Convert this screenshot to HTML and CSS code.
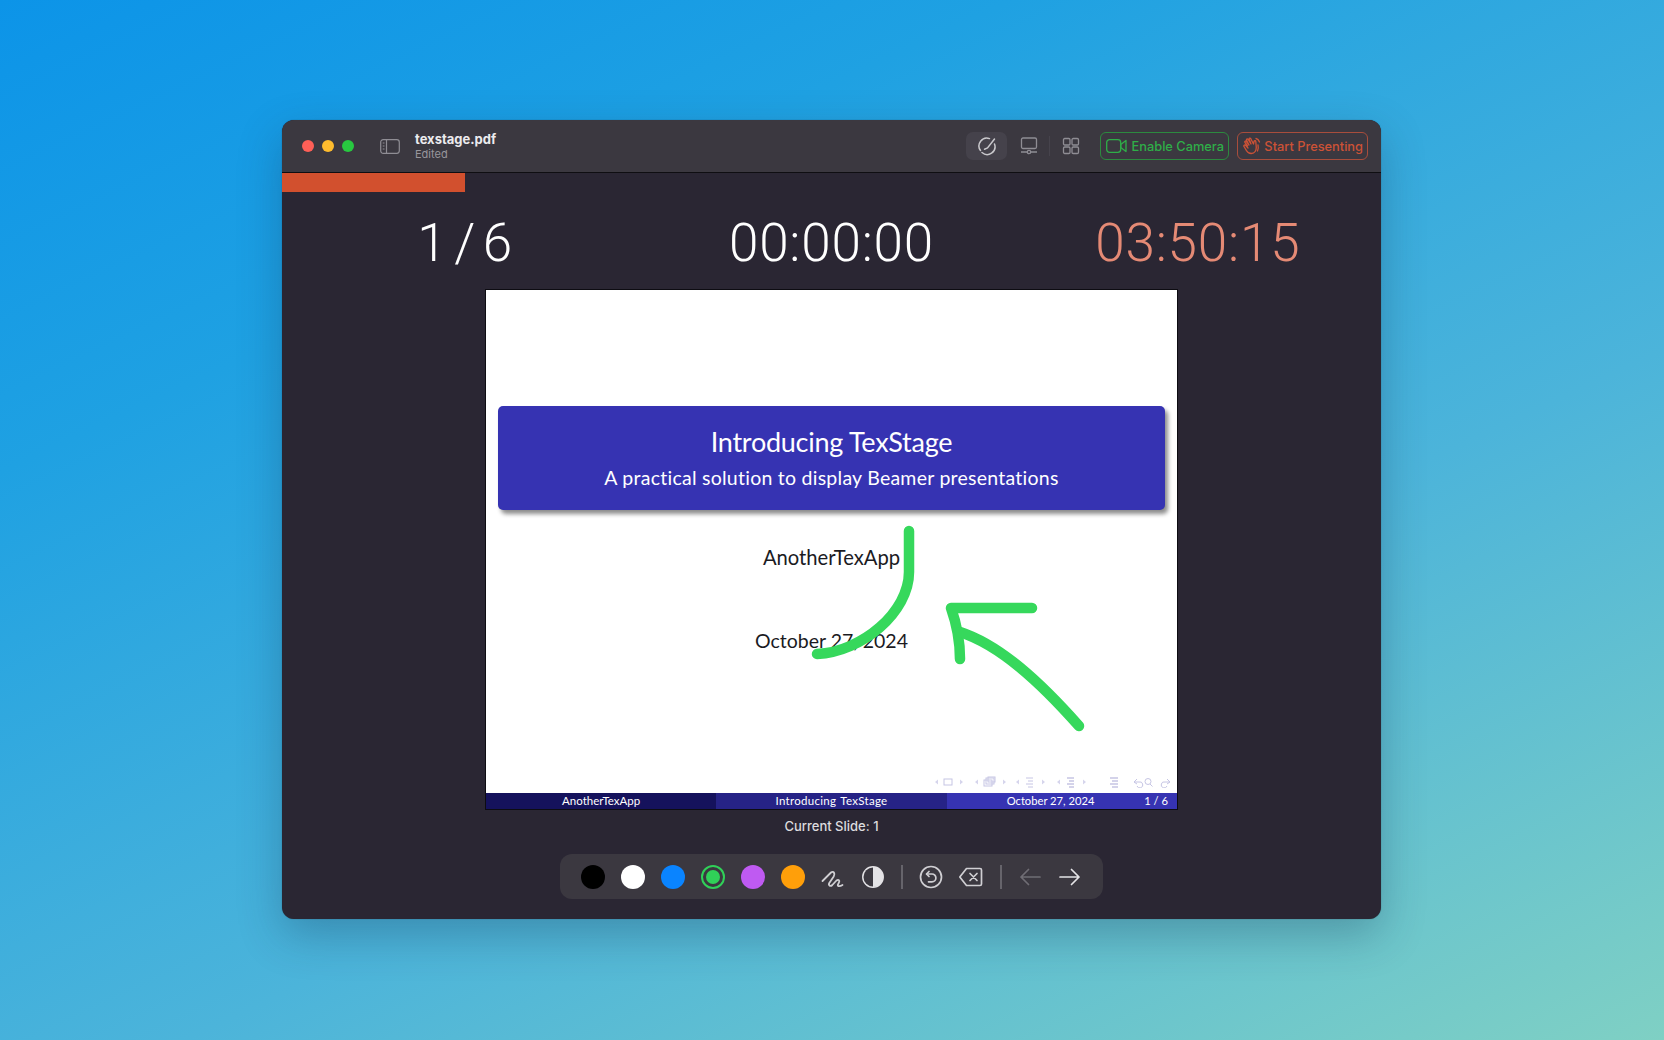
FILE: index.html
```html
<!DOCTYPE html>
<html lang="en">
<head>
<meta charset="utf-8">
<title>texstage.pdf</title>
<link rel="stylesheet" href="styles.css">
</head>
<body>
<main class="window">
  <header class="titlebar">
    <div class="lights"><span class="light red"></span><span class="light yellow"></span><span class="light green"></span></div>
    <svg class="sidebar-icon" width="20" height="15" viewBox="0 0 20 15" fill="none" stroke="#8f8d94" stroke-width="1.2"><rect x=".7" y=".7" width="18.6" height="13.6" rx="2.5"/><path d="M6.5 1v13"/><path d="M2.7 4h1.8M2.7 7h1.8M2.7 10h1.8"/></svg>
    <div class="doc"><div class="doc-name">texstage.pdf</div><div class="doc-state">Edited</div></div>
    <div class="tools">
      <button class="tool active"><svg width="20" height="20" viewBox="0 0 20 20" fill="none" stroke="#c9c8cc" stroke-width="1.500" stroke-linecap="round"><path d="M12.500 2.600A7.800 7.800 0 0 0 3.500 14.500"/><path d="M17.500 8A7.800 7.800 0 0 1 5 16.500"/><path d="M7.500 13.200L10.500 12 17.500 3"/></svg></button>
      <button class="tool"><svg width="18" height="18" viewBox="0 0 18 18" fill="none" stroke="#8f8d94" stroke-width="1.3"><rect x="1.500" y="1" width="15" height="10.500" rx="1.500"/><path d="M1 15h6M11 15h6"/><circle cx="9" cy="15" r="1.700"/></svg></button>
      <span class="tool-sep"></span>
      <button class="tool"><svg width="18" height="18" viewBox="0 0 18 18" fill="none" stroke="#8f8d94" stroke-width="1.3"><rect x="1.500" y="1.500" width="6.500" height="6.500" rx="1.200"/><rect x="10" y="1.500" width="6.500" height="6.500" rx="1.200"/><rect x="1.500" y="10" width="6.500" height="6.500" rx="1.200"/><rect x="10" y="10" width="6.500" height="6.500" rx="1.200"/></svg></button>
      <button class="pill camera"><svg width="21" height="14" viewBox="0 0 21 14" fill="none" stroke="currentColor" stroke-width="1.300"><rect x=".7" y=".7" width="14" height="12.600" rx="2.800"/><path d="M14.800 5.500L20 1.500V12.500L14.800 8.500Z" stroke-linejoin="round"/></svg><span>Enable Camera</span></button>
      <button class="pill present"><svg width="18" height="18" viewBox="0 0 18 18" fill="none" stroke="currentColor" stroke-width="1.300" stroke-linecap="round" stroke-linejoin="round"><path d="M4.500 9L2 5.500c-.7-1 .6-2 1.400-1L6 8M6 8L3.600 3.300c-.6-1.100.8-1.800 1.500-.8L8 7M8 7L6.200 2.300c-.4-1.100 1-1.600 1.600-.6L10.500 7l.5-2.500c.3-1 1.700-1 1.800 0l.4 5c.4 4-1.500 7-5 7-2.500 0-4-1.500-5-3.300L1 9.500c-.6-1 .6-2 1.500-1.200L5 11"/><path d="M13 1.500c1.500.3 2.800 1.500 3.500 3.500M15 8c.5 2 .5 4-.5 6"/></svg><span>Start Presenting</span></button>
    </div>
  </header>
  <div class="progress"><div class="progress-fill"></div></div>
  <section class="stats">
    <div class="stat tight">1 / 6</div>
    <div class="stat">00:00:00</div>
    <div class="stat remain">03:50:15</div>
  </section>
  <section class="slide">
    <div class="slide-title">
      <div class="slide-heading">Introducing TexStage</div>
      <div class="slide-sub">A practical solution to display Beamer presentations</div>
    </div>
    <div class="slide-author">AnotherTexApp</div>
    <div class="slide-date">October 27, 2024</div>
    <svg class="nav-icons" width="237" height="12" viewBox="0 0 237 12" fill="none" stroke="#c6c5e4" stroke-width="1">
      <path d="M1 6l3-2.500v5zM26 3.500v5l3-2.500z" fill="#d6d5ec" stroke="none"/><rect x="10" y="3" width="8" height="6"/>
      <path d="M41 6l3-2.500v5zM69 3.500v5l3-2.500z" fill="#d6d5ec" stroke="none"/><rect x="50" y="4" width="8" height="6"/><rect x="52" y="2" width="8" height="6"/><rect x="54" y="1" width="7" height="5"/>
      <path d="M82 6l3-2.500v5zM108 3.500v5l3-2.500z" fill="#d6d5ec" stroke="none"/><path d="M92 2h7M94 5h5M92 8h7M94 11h5"/>
      <path d="M123 6l3-2.500v5zM149 3.500v5l3-2.500z" fill="#d6d5ec" stroke="none"/><path d="M133 2h7M135 5h5M133 8h7M135 11h5" stroke-width="1.400"/>
      <path d="M176 2h8M178 5h6M176 8h8M178 11h6" stroke-width="1.400"/>
      <path d="M203 3l-3 3 3 2M200 6h5a3 3 0 1 1-2 4"/><circle cx="214" cy="5.500" r="3"/><path d="M216 8l2.500 2.500"/><path d="M233 3l3 3-3 2M236 6h-5a3 3 0 1 0 2 4"/>
    </svg>
    <footer class="slide-foot">
      <div class="foot-cell foot-a">AnotherTexApp</div>
      <div class="foot-cell foot-b">Introducing TexStage</div>
      <div class="foot-cell foot-c"><span>October 27, 2024</span><span>1 / 6</span></div>
    </footer>
    <svg class="ink" width="691" height="519" viewBox="486 290 691 519" fill="none" stroke="#36d85c" stroke-width="10.500" stroke-linecap="round" stroke-linejoin="round">
      <path d="M909 531V572C909 612 862 652 817 654"/>
      <path d="M1032 608H951C957 625 960 640 960 659"/>
      <path d="M1079 726C1040 682 1000 645 960 632"/>
    </svg>
  </section>
  <div class="caption">Current Slide: 1</div>
  <nav class="toolbar">
    <span class="swatch black"></span>
    <span class="swatch white"></span>
    <span class="swatch blue"></span>
    <span class="swatch green selected"></span>
    <span class="swatch purple"></span>
    <span class="swatch orange"></span>
    <svg class="tb-icon" width="24" height="24" viewBox="0 0 24 24" fill="none" stroke="#d0cfd3" stroke-width="1.800" stroke-linecap="round" stroke-linejoin="round"><path d="M1.500 16L10 7.500C12.500 5.500 14.500 8.500 12.700 11.500L8.300 18C7 20.500 9.500 21.800 11.300 20L15.500 15.500C17.500 14 19 15.500 18 17.300L16.800 19.800C16.500 21.500 19 21.500 21.500 20"/></svg>
    <svg class="tb-icon" width="24" height="24" viewBox="0 0 24 24"><circle cx="12" cy="12" r="10.200" fill="#e4e3e6" stroke="#e4e3e6" stroke-width="1.500"/><path d="M12 2.500a9.500 9.500 0 0 0 0 19z" fill="#3b3840"/></svg>
    <span class="tb-sep"></span>
    <svg class="tb-icon" width="24" height="24" viewBox="0 0 24 24" fill="none" stroke="#d0cfd3" stroke-width="1.700" stroke-linecap="round" stroke-linejoin="round"><circle cx="12" cy="12" r="10.500"/><path d="M10 6.500L7.500 9 10 11.500"/><path d="M7.700 9H13a3.900 3.900 0 0 1 0 7.800H9.500"/></svg>
    <svg class="tb-icon" width="24" height="24" viewBox="0 0 24 24" fill="none" stroke="#d0cfd3" stroke-width="1.700" stroke-linecap="round" stroke-linejoin="round"><path d="M7.500 3.500H21c1 0 1.500.5 1.500 1.500v14c0 1-.5 1.500-1.500 1.500H7.500L.8 12z"/><path d="M11 8.500l7 7M18 8.500l-7 7"/></svg>
    <span class="tb-sep last"></span>
    <svg class="tb-icon" width="24" height="24" viewBox="0 0 24 24" fill="none" stroke="#6f6d74" stroke-width="1.700" stroke-linecap="round" stroke-linejoin="round"><path d="M22 12H3M10.500 4.500L3 12l7.500 7.500"/></svg>
    <svg class="tb-icon" width="24" height="24" viewBox="0 0 24 24" fill="none" stroke="#e4e3e6" stroke-width="1.700" stroke-linecap="round" stroke-linejoin="round"><path d="M2 12h19M13.500 4.500L21 12l-7.500 7.500"/></svg>
  </nav>
</main>
</body>
</html>
```
FILE: styles.css
```css
* { box-sizing: border-box; }
html, body { margin: 0; height: 100%; }
body {
  width: 1664px;
  height: 1040px;
  overflow: hidden;
  padding: 120px 0 0 282px;
  font-family: "Inter", "Liberation Sans", sans-serif;
  background: linear-gradient(155deg, #0c94e8 0%, #1fa1e2 26%, #4cb4da 62%, #7fd0c4 100%);
}
.window {
  width: 1099px;
  height: 799px;
  background: #2a2633;
  border-radius: 12px;
  display: flex;
  flex-direction: column;
  box-shadow: 0 16px 44px rgba(20, 50, 80, .3), 0 0 1px rgba(0, 0, 0, .5);
}
.titlebar {
  height: 53px;
  flex: none;
  display: flex;
  align-items: center;
  background: #3b3840;
  border-bottom: 1px solid #0f0e12;
  border-radius: 12px 12px 0 0;
  padding: 0 13px 0 20px;
}
.lights { display: flex; gap: 8px; }
.light { width: 12px; height: 12px; border-radius: 50%; }
.red { background: #fe5f57; }
.yellow { background: #febb2e; }
.light.green { background: #28c840; }
.sidebar-icon { margin-left: 26px; }
.doc { margin-left: 15px; }
.doc-name { font-size: 13px; font-weight: 700; line-height: 15px; color: #ecebee; }
.doc-state { font-size: 11px; line-height: 14px; color: #98969c; }
.tools { margin-left: auto; display: flex; align-items: center; }
.tool {
  width: 41px;
  height: 28px;
  padding: 0;
  border: 0;
  border-radius: 7px;
  background: none;
  display: flex;
  align-items: center;
  justify-content: center;
}
.tool.active { background: #45424b; margin-right: 1px; }
.tool-sep { width: 1px; height: 20px; background: #46434c; }
.pill {
  height: 28px;
  padding: 0 4px 0 5px;
  margin-left: 8px;
  display: flex;
  align-items: center;
  justify-content: space-between;
  border: 1px solid;
  border-radius: 6px;
  background: none;
  font: 500 12.800px "Inter", sans-serif;
  white-space: nowrap;
}
.camera { color: #2fae48; border-color: #2c8a3f; width: 129px; margin-left: 9px; }
.present { color: #cd5236; border-color: #a84d3c; width: 131px; }
.progress { height: 19px; flex: none; }
.progress-fill { width: 16.67%; height: 100%; background: #d2502e; }
.stats {
  height: 98px;
  flex: none;
  display: grid;
  grid-template-columns: repeat(3, 1fr);
  align-items: center;
  text-align: center;
  font: 300 53px "Roboto", sans-serif;
  letter-spacing: .8px;
  color: #fff;
  padding-top: 4px;
}
.tight { word-spacing: -7px; }
.remain { color: #e58a75; }
.slide {
  position: relative;
  width: 691px;
  height: 519px;
  flex: none;
  margin: 0 auto;
  background: #fff;
  box-shadow: 0 0 0 1px #0d0c12;
  display: flex;
  flex-direction: column;
  font-family: "Lato", sans-serif;
  color: #1b1b1f;
}
.slide-title {
  margin: 116px 12px 0;
  height: 104px;
  flex: none;
  border-radius: 5px;
  background: #3633b2;
  box-shadow: 3px 4px 4px rgba(0, 0, 0, .45);
  color: #fff;
  text-align: center;
  padding-top: 19px;
}
.slide-heading { font-size: 27px; line-height: 34px; letter-spacing: -.25px; }
.slide-sub { font-size: 19.500px; line-height: 26px; margin-top: 6px; letter-spacing: .25px; }
.slide-author { margin-top: 33px; text-align: center; font-size: 20.200px; line-height: 28px; }
.slide-date { margin-top: 56px; text-align: center; font-size: 19.500px; line-height: 28px; }
.nav-icons { margin: auto 0 5px 448px; flex: none; }
.slide-foot { display: grid; grid-template-columns: repeat(3, 1fr); height: 16px; flex: none; font-size: 11.500px; color: #fff; }
.foot-cell { display: flex; align-items: center; justify-content: center; line-height: 16px; }
.foot-a { background: #15125c; }
.foot-b { background: #262386; letter-spacing: .3px; word-spacing: 1px; }
.foot-c { background: #3633b2; justify-content: space-between; padding: 0 9px 0 60px; font-size: 11.200px; }
.ink { position: absolute; left: 0; top: 0; }
.caption { text-align: center; font-size: 13px; font-weight: 500; line-height: 16px; margin-top: 9px; color: #dddcdf; flex: none; }
.toolbar {
  width: 543px;
  height: 45px;
  flex: none;
  margin: 20px auto 0;
  padding: 0 20px 0 20.500px;
  background: #3b3840;
  border-radius: 12px;
  display: flex;
  align-items: center;
  gap: 16px;
}
.swatch { width: 24px; height: 24px; border-radius: 50%; flex: none; }
.black { background: #000; }
.white { background: #fff; }
.blue { background: #0a84ff; }
.swatch.green { background: #30d158; }
.selected { background-clip: content-box !important; padding: 3px; border: 2px solid #30d158; }
.purple { background: #bf5af2; }
.orange { background: #ff9f0a; }
.tb-icon { flex: none; }
.tb-sep { width: 2px; height: 24px; flex: none; background: #66646b; }
.tb-sep.last { margin-left: 1px; }
```
